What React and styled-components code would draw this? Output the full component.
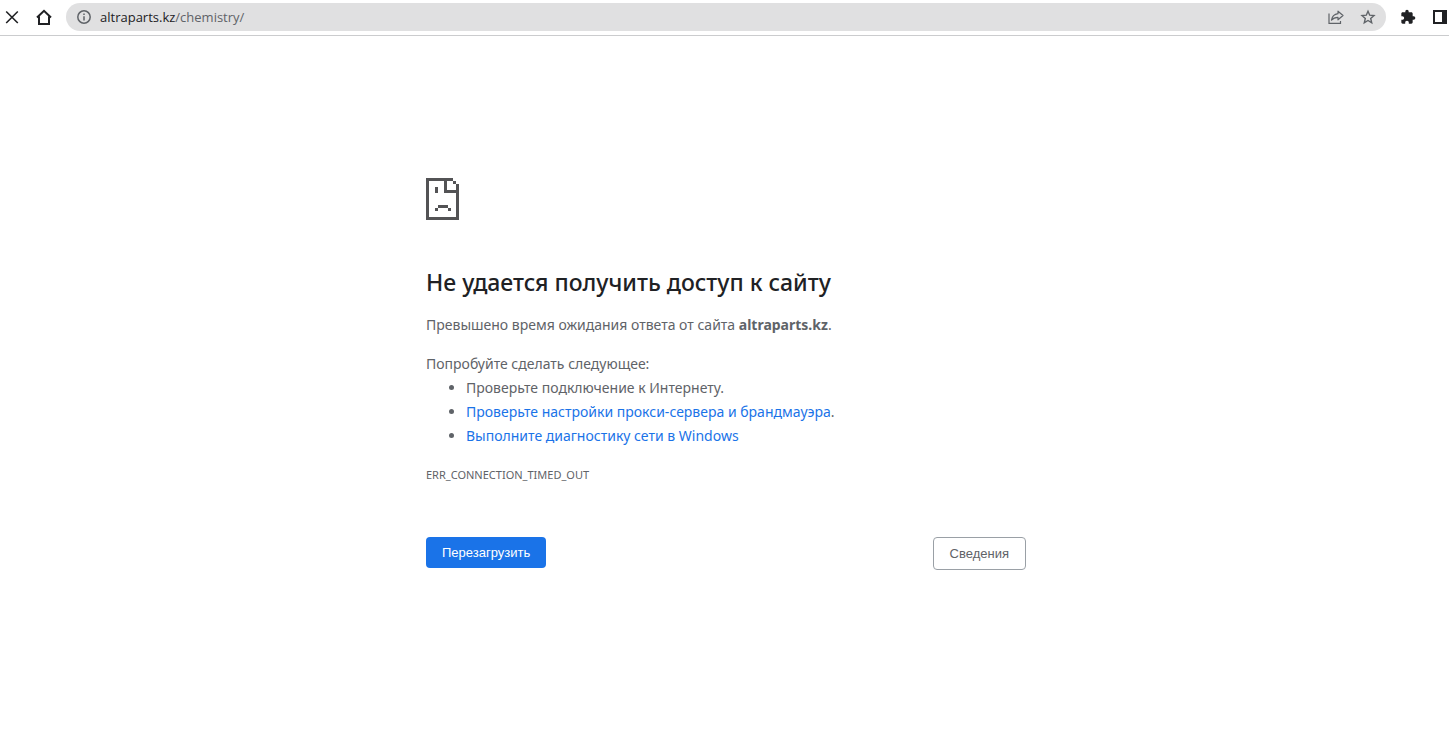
import React from "react";
import styled, { createGlobalStyle } from "styled-components";

const GlobalStyle = createGlobalStyle`
  body {
    margin: 0;
    background: #fff;
    color: #5f6368;
    font-family: "Noto Sans", "Open Sans", sans-serif;
  }
`;

const Toolbar = styled.header`
  display: flex;
  align-items: center;
  box-sizing: border-box;
  height: 36px;
  padding: 0 0 2px 4px;
  border-bottom: 1px solid #cbccce;
`;

const IconButton = styled.button`
  display: flex;
  flex: none;
  padding: 0;
  border: none;
  background: none;
  color: ${({ $muted }) => ($muted ? "#5f6368" : "#202124")};
  cursor: pointer;
`;

const Navigation = styled.nav`
  display: flex;
  gap: 16px;
  margin-right: 14px;
`;

const AddressBar = styled.form`
  display: flex;
  flex: 1;
  align-items: center;
  gap: 8px;
  box-sizing: border-box;
  height: 28px;
  padding: 0 10px;
  border-radius: 14px;
  background: #e0e0e1;
`;

const Address = styled.div`
  flex: 1;
  font-family: "Open Sans", sans-serif;
  font-size: 13px;
  line-height: 20px;
`;

const Domain = styled.span`
  color: #202124;
`;

const Actions = styled.div`
  display: flex;
  gap: 16px;
`;

const Extensions = styled.div`
  display: flex;
  gap: 16px;
  margin-left: 14px;
`;

const Main = styled.main`
  box-sizing: border-box;
  width: 100%;
  max-width: 603px;
  margin: 0 auto;
  padding: 142px 0 0 3px;
  font-size: 14px;
  line-height: 24px;
`;

const SadPage = styled.svg`
  display: block;
  margin-bottom: 47px;
  color: #535355;
`;

const Title = styled.h1`
  margin: 0 0 16px;
  color: #202124;
  font-size: 23px;
  font-weight: 500;
  line-height: 30px;
`;

const Text = styled.p`
  margin: 0;
  padding-bottom: ${({ $gap }) => $gap || 0}px;
`;

const Suggestions = styled.ul`
  margin: 0 0 15px;
  padding-left: 40px;
`;

const Link = styled.a`
  color: #1a73e8;
  text-decoration: none;
`;

const ErrorCode = styled.div`
  font-size: 11px;
`;

const Buttons = styled.div`
  display: flex;
  align-items: flex-start;
  justify-content: space-between;
  margin-top: 50px;
`;

const Button = styled.button`
  padding: 8px 16px;
  border: ${({ $primary }) => ($primary ? "none" : "1px solid #9aa0a6")};
  border-radius: 4px;
  background: ${({ $primary }) => ($primary ? "#1a73e8" : "#fff")};
  color: ${({ $primary }) => ($primary ? "#fff" : "#5f6368")};
  font-family: "Liberation Sans", Arial, sans-serif;
  font-size: 13px;
  line-height: 15px;
  cursor: pointer;
`;

const CloseIcon = () => (
  <svg width="16" height="16" viewBox="0 0 16 16" stroke="currentColor" strokeWidth="1.6">
    <path d="M2.200 2.500 13.800 14M13.800 2.500 2.200 14" />
  </svg>
);

const HomeIcon = () => (
  <svg width="16" height="16" viewBox="0 0 16 16" fill="none" stroke="currentColor" strokeWidth="2">
    <path d="M1 8.5 8 1.8 15 8.5M3 7.5V15H13V7.5" />
  </svg>
);

const InfoIcon = () => (
  <svg width="16" height="16" viewBox="0 0 16 16" fill="none" stroke="#5f6368" strokeWidth="1.5">
    <circle cx="8" cy="8" r="6.2" />
    <path d="M8 7.2V11.4M8 4.4V6" />
  </svg>
);

const ShareIcon = () => (
  <svg width="16" height="16" viewBox="0 0 16 16" fill="none" stroke="currentColor" strokeWidth="1.2">
    <path d="M1 4.5V14.4H12.5V12" />
    <path d="M10 2.2 15 6.5 10 10.8V8.4C7 8.4 5 9.3 3.5 11.2 4 7.8 6.2 5.2 10 4.7Z" strokeLinejoin="round" />
  </svg>
);

const StarIcon = () => (
  <svg width="16" height="16" viewBox="0 0 16 16" fill="none" stroke="currentColor" strokeWidth="1.4">
    <path d="M8 2.2 9.7 6.2 14 6.6 10.7 9.5 11.7 13.8 8 11.5 4.3 13.8 5.3 9.5 2 6.6 6.3 6.2Z" />
  </svg>
);

const PuzzleIcon = () => (
  <svg width="16" height="16" viewBox="0 0 24 24" fill="currentColor">
    <path d="M20.5 11H19V7c0-1.100-.9-2-2-2h-4V3.500a2.500 2.500 0 0 0-5 0V5H4c-1.100 0-2 .9-2 2v3.800h1.500c1.500 0 2.700 1.200 2.700 2.700S5 16.200 3.500 16.200H2V20c0 1.100.9 2 2 2h3.800v-1.500c0-1.500 1.200-2.700 2.700-2.700s2.700 1.200 2.700 2.700V22H17c1.100 0 2-.9 2-2v-4h1.500a2.500 2.500 0 0 0 0-5z" />
  </svg>
);

const PanelIcon = () => (
  <svg width="17" height="16" viewBox="0 0 17 16">
    <path d="M1 1H15V15H1ZM3 3V13H10V3Z" fill="currentColor" fillRule="evenodd" />
  </svg>
);

const App = () => (
  <>
    <GlobalStyle />
    <Toolbar>
      <Navigation>
        <IconButton aria-label="Остановить">
          <CloseIcon />
        </IconButton>
        <IconButton aria-label="Главная">
          <HomeIcon />
        </IconButton>
      </Navigation>
      <AddressBar onSubmit={(e) => e.preventDefault()}>
        <InfoIcon />
        <Address>
          <Domain>altraparts.kz</Domain>/chemistry/
        </Address>
        <Actions>
          <IconButton type="button" $muted aria-label="Поделиться">
            <ShareIcon />
          </IconButton>
          <IconButton type="button" $muted aria-label="Добавить в закладки">
            <StarIcon />
          </IconButton>
        </Actions>
      </AddressBar>
      <Extensions>
        <IconButton aria-label="Расширения">
          <PuzzleIcon />
        </IconButton>
        <IconButton aria-label="Боковая панель">
          <PanelIcon />
        </IconButton>
      </Extensions>
    </Toolbar>
    <Main>
      <SadPage width="33" height="42" viewBox="0 0 33 42" fill="currentColor" shapeRendering="crispEdges">
        <path d="M0 0H27V3H21V12H30V6H33V42H0ZM3 3V39H30V15H18V3Z" fillRule="evenodd" />
        <path d="M27 3H30V6H27ZM9 9H12V15H9ZM12 27H22V30H12ZM9 30H12V33H9ZM22 30H25V33H22Z" />
      </SadPage>
      <Title>Не удается получить доступ к сайту</Title>
      <Text $gap={15}>
        Превышено время ожидания ответа от сайта <strong>altraparts.kz</strong>.
      </Text>
      <Text>Попробуйте сделать следующее:</Text>
      <Suggestions>
        <li>Проверьте подключение к Интернету.</li>
        <li>
          <Link href="#proxy">Проверьте настройки прокси-сервера и брандмауэра</Link>.
        </li>
        <li>
          <Link href="#diagnose">Выполните диагностику сети в Windows</Link>
        </li>
      </Suggestions>
      <ErrorCode>ERR_CONNECTION_TIMED_OUT</ErrorCode>
      <Buttons>
        <Button $primary onClick={() => window.location.reload()}>
          Перезагрузить
        </Button>
        <Button>Сведения</Button>
      </Buttons>
    </Main>
  </>
);

export default App;
